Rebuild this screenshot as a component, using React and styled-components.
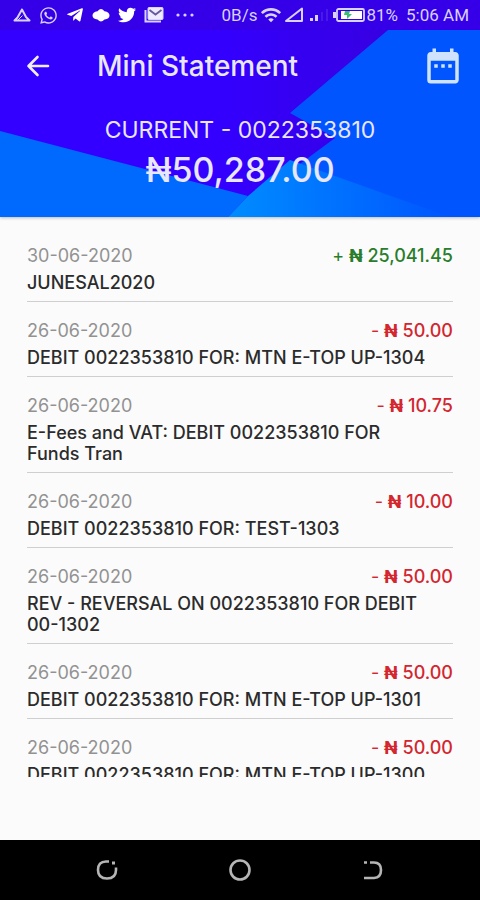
import React from 'react';
import styled, { createGlobalStyle } from 'styled-components';
import { FaWhatsapp, FaTelegramPlane, FaTwitter } from 'react-icons/fa';
import { MdDateRange, MdWifi } from 'react-icons/md';

const GlobalStyle = createGlobalStyle`
  * { box-sizing: border-box; }
  body { margin: 0; background: #fbfbfb; }
`;

const Screen = styled.div`
  height: 100vh;
  display: flex;
  flex-direction: column;
  background: #fbfbfb;
  color: #2b2b2b;
  font-family: Inter, "Open Sans", sans-serif;
`;

const Header = styled.header`
  position: relative;
  isolation: isolate;
  flex: none;
  padding-bottom: 27px;
  color: #e9e6ff;
  background: #3300ff;
  box-shadow: 0 1px 3px rgba(0, 0, 0, 0.25);
`;

const Backdrop = styled.svg`
  position: absolute;
  inset: 0;
  width: 100%;
  height: 100%;
  z-index: -1;
`;

const StatusBar = styled.div`
  display: flex;
  align-items: center;
  justify-content: space-between;
  height: 30px;
  padding: 0 11px 0 13px;
  background: #3500e8;
  color: #d8d2ff;
  font: 400 17px/20px Roboto, sans-serif;
  white-space: nowrap;
`;

const StatusGroup = styled.div`
  display: flex;
  align-items: center;
  gap: ${(p) => p.$gap}px;
  svg { flex: none; display: block; }
`;

const Clock = styled.span`
  margin-left: 6px;
`;

const Toolbar = styled.div`
  display: flex;
  align-items: center;
  height: 72px;
  padding: 0 16px 0 22px;
`;

const IconButton = styled.button`
  display: flex;
  padding: 0;
  border: 0;
  background: none;
  color: ${(p) => p.$tint};
  cursor: pointer;
`;

const Title = styled.h1`
  flex: 1;
  margin: 0 0 0 43px;
  font-size: 28px;
  line-height: 32px;
  font-weight: 500;
`;

const Account = styled.p`
  margin: 14px 0 6px;
  font-size: 23px;
  line-height: 28px;
  text-align: center;
`;

const Balance = styled.p`
  margin: 0;
  font-size: 34px;
  line-height: 40px;
  font-weight: 500;
  text-align: center;
`;

const List = styled.ul`
  flex: 1;
  min-height: 0;
  margin: 10px 27px 63px;
  padding: 0;
  list-style: none;
  overflow-y: auto;
  scrollbar-width: none;
`;

const Item = styled.li`
  padding: 18px 0 8px;
  border-bottom: 1px solid #cfcfcf;
`;

const ItemTop = styled.div`
  display: flex;
  justify-content: space-between;
  margin-bottom: 5px;
  font-size: 18px;
  line-height: 22px;
`;

const DateText = styled.time`
  color: #929292;
`;

const Amount = styled.span`
  color: ${(p) => (p.$credit ? '#2a7d2c' : '#d3262f')};
  font-weight: 500;
`;

const Sign = styled.span`
  font-weight: 400;
`;

const Naira = styled.span`
  font-weight: 700;
`;

const Description = styled.p`
  margin: 0;
  padding-right: 20px;
  font-size: 18px;
  line-height: 21px;
  font-weight: 500;
`;

const NavBar = styled.nav`
  flex: none;
  display: grid;
  grid-template-columns: repeat(3, 1fr);
  justify-items: center;
  align-items: center;
  height: 60px;
  padding: 0 40px;
  background: #000;
`;

const transactions = [
  { date: '30-06-2020', credit: true, amount: '25,041.45', text: 'JUNESAL2020' },
  { date: '26-06-2020', amount: '50.00', text: 'DEBIT 0022353810 FOR: MTN E-TOP UP-1304' },
  { date: '26-06-2020', amount: '10.75', text: 'E-Fees and VAT: DEBIT 0022353810 FOR Funds Tran' },
  { date: '26-06-2020', amount: '10.00', text: 'DEBIT 0022353810 FOR: TEST-1303' },
  { date: '26-06-2020', amount: '50.00', text: 'REV - REVERSAL ON 0022353810 FOR DEBIT 00-1302' },
  { date: '26-06-2020', amount: '50.00', text: 'DEBIT 0022353810 FOR: MTN E-TOP UP-1301' },
  { date: '26-06-2020', amount: '50.00', text: 'DEBIT 0022353810 FOR: MTN E-TOP UP-1300' },
];

function HeaderArt() {
  return (
    <Backdrop viewBox="0 0 480 217" preserveAspectRatio="none" aria-hidden="true">
      <defs>
        <linearGradient id="glow" x1="0" y1="0" x2="1" y2="0">
          <stop offset="0" stopColor="#008cff" />
          <stop offset="1" stopColor="#0055ff" />
        </linearGradient>
        <linearGradient id="shade" x1="0" y1="0" x2="1" y2="0">
          <stop offset="0.45" stopColor="#3300ff" />
          <stop offset="0.8" stopColor="#3700e2" />
        </linearGradient>
      </defs>
      <rect width="480" height="217" fill="url(#shade)" />
      <path d="M0 131 248 196 228 217H0Z" fill="#006aff" />
      <path d="M388 30H480V217H228L335 138 290 113Z" fill="#0055ff" />
      <path d="M290 160 450 217H228L248 196Z" fill="url(#glow)" />
    </Backdrop>
  );
}

function StatusIcons() {
  return (
    <StatusGroup $gap={8}>
      <svg width="18" height="18" viewBox="0 0 18 18" fill="none" stroke="currentColor" strokeWidth="2" strokeLinejoin="round">
        <path d="M9 3.500 4.500 11.500 1.500 14.500H16.500L13 11Z" />
        <path d="M5 14 9.500 9.500" strokeWidth="1" />
      </svg>
      <FaWhatsapp size={19} />
      <FaTelegramPlane size={18} color="#fff" />
      <svg width="18" height="18" viewBox="0 0 18 18" fill="#fff">
        <path d="M9 3q1.500 0 3.500 2.300Q17.500 6 17.500 9.500T12.500 13.500Q10.500 15.500 9 15.500T5.500 13.500Q.5 13 .5 9.500T5.500 5.300Q7.500 3 9 3Z" />
      </svg>
      <FaTwitter size={18} color="#fff" />
      <svg width="20" height="18" viewBox="0 0 20 18" fill="none" stroke="currentColor">
        <path d="M1.500 4V15.500H17" strokeWidth="2" />
        <rect x="4" y="1.500" width="15" height="12" rx="1" fill="#eeeaff" />
        <path d="M5.500 4 11.500 8.500 17.500 4" stroke="#68599a" strokeWidth="1.800" />
      </svg>
      <svg width="28" height="18" viewBox="0 0 28 18" fill="currentColor">
        <circle cx="6" cy="9" r="1.600" /><circle cx="13" cy="9" r="1.600" /><circle cx="20" cy="9" r="1.600" />
      </svg>
    </StatusGroup>
  );
}

function SystemStatus() {
  return (
    <StatusGroup $gap={2}>
      <span>0B/s</span>
      <MdWifi size={22} />
      <svg width="20" height="16" viewBox="0 0 20 16" fill="none" stroke="currentColor" strokeWidth="2" strokeLinejoin="round">
        <path d="M18 1.500V14H2Z" />
      </svg>
      <svg width="24" height="16" viewBox="0 0 24 16" fill="currentColor">
        <rect x="4" y="11" width="3" height="3" />
        <rect x="9" y="8" width="3" height="6" />
        <path d="M15 5h2v9h-2zM20 2h2v12h-2z" opacity=".12" />
      </svg>
      <svg width="33" height="14" viewBox="0 0 33 14">
        <rect x="1" y="4" width="3" height="6" fill="currentColor" />
        <rect x="5" y="1" width="27" height="12" rx="1.500" fill="none" stroke="currentColor" strokeWidth="1.800" />
        <rect x="9" y="3" width="21" height="8" fill="#fff" />
        <path d="M13 3h5l-1 3h3l-5 5v-4h-3z" fill="#3bbd72" />
      </svg>
      <span>81%</span>
      <Clock>5:06 AM</Clock>
    </StatusGroup>
  );
}

function Transaction({ date, credit, amount, text }) {
  return (
    <Item>
      <ItemTop>
        <DateText>{date}</DateText>
        <Amount $credit={credit}>
          <Sign>{credit ? '+' : '-'}</Sign> <Naira>₦</Naira> {amount}
        </Amount>
      </ItemTop>
      <Description>{text}</Description>
    </Item>
  );
}

export default function App() {
  return (
    <Screen>
      <GlobalStyle />
      <Header>
        <HeaderArt />
        <StatusBar>
          <StatusIcons />
          <SystemStatus />
        </StatusBar>
        <Toolbar>
          <IconButton type="button" aria-label="Back" $tint="#f0edff">
            <svg width="32" height="32" viewBox="0 0 32 32" fill="none" stroke="currentColor" strokeWidth="2.600" strokeLinecap="round" strokeLinejoin="round">
              <path d="M26 16H6.500M15.500 7 6.500 16l9 9" />
            </svg>
          </IconButton>
          <Title>Mini Statement</Title>
          <IconButton type="button" aria-label="Choose dates" $tint="#cfe3ff">
            <MdDateRange size={42} />
          </IconButton>
        </Toolbar>
        <Account>CURRENT - 0022353810</Account>
        <Balance>₦50,287.00</Balance>
      </Header>
      <List>
        {transactions.map((item) => (
          <Transaction key={item.text} {...item} />
        ))}
      </List>
      <NavBar>
        <IconButton type="button" aria-label="Recent apps" $tint="#b5b5b5">
          <svg width="24" height="24" viewBox="0 0 24 24" fill="none" stroke="currentColor" strokeWidth="2.600">
            <path d="M14 3.500H11Q3 3.500 3 12T12 20.500 21 12V9.500" />
            <rect x="17" y="3.500" width="3" height="3" fill="currentColor" stroke="none" />
          </svg>
        </IconButton>
        <IconButton type="button" aria-label="Home" $tint="#b5b5b5">
          <svg width="24" height="24" viewBox="0 0 24 24" fill="none" stroke="currentColor" strokeWidth="2.600">
            <circle cx="12" cy="12" r="9.500" />
          </svg>
        </IconButton>
        <IconButton type="button" aria-label="Go back" $tint="#b5b5b5">
          <svg width="24" height="24" viewBox="0 0 24 24" fill="none" stroke="currentColor" strokeWidth="2.600">
            <path d="M3 4.500H6M9 4.500H13Q20 4.500 20 12T13 20H3" />
          </svg>
        </IconButton>
      </NavBar>
    </Screen>
  );
}
